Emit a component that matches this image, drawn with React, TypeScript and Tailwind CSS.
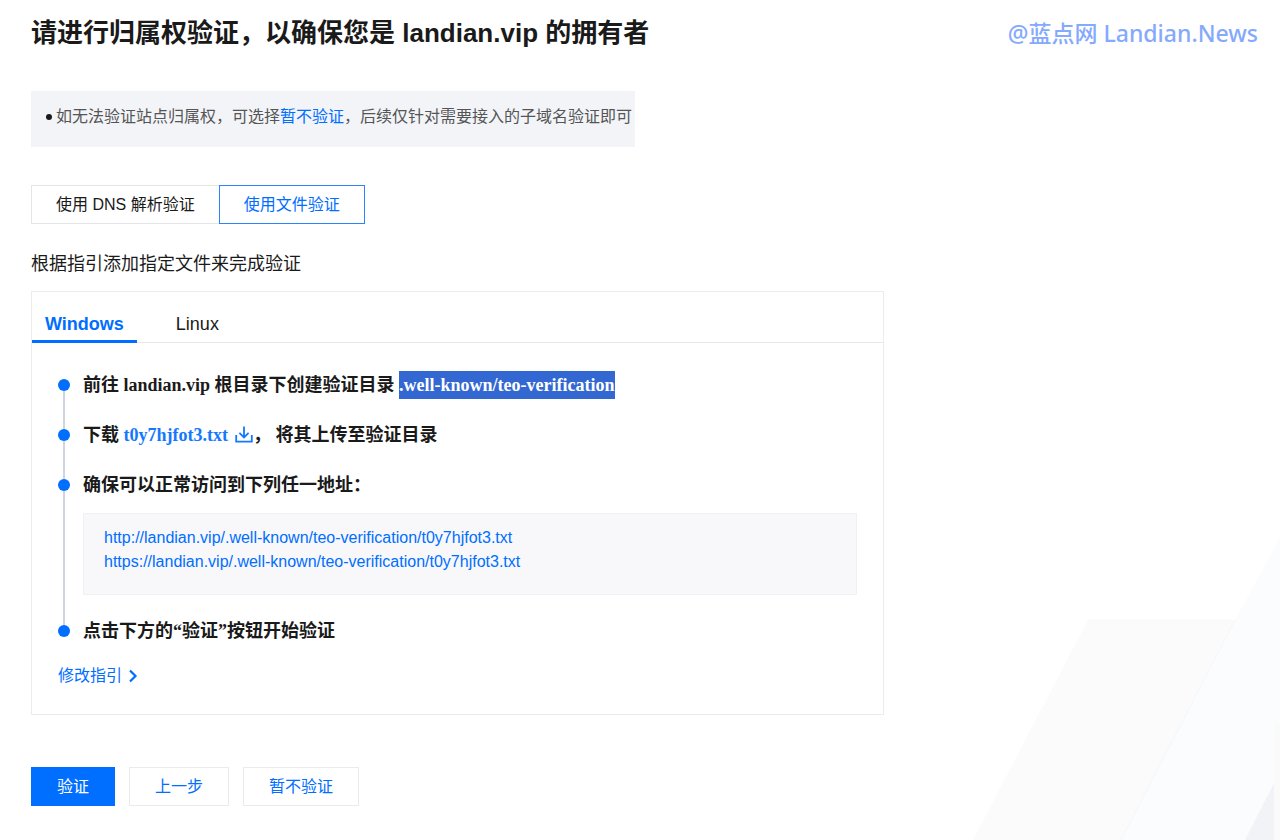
import { useState } from "react";
import type { ReactNode } from "react";

const urls = [
  "http://landian.vip/.well-known/teo-verification/t0y7hjfot3.txt",
  "https://landian.vip/.well-known/teo-verification/t0y7hjfot3.txt",
];

function Backdrop() {
  return (
    <svg
      aria-hidden="true"
      className="pointer-events-none absolute right-0 bottom-0 -z-10"
      width="310"
      height="302"
      viewBox="0 0 310 302"
      fill="none"
    >
      <path d="M118 82H265L310 20V302H3Z" fill="#fbfbfc" />
      <path d="M310 0V302H151L265 82Z" fill="#fbfcfd" />
      <path d="M118 82H263" stroke="#f9fafb" />
      <path d="M265 82L151 302" stroke="#f5f6f9" />
      <path d="M304 186H310V302H304Z" fill="#fafafb" />
      <path d="M304 245V302H275Z" fill="#f2f3f7" />
    </svg>
  );
}

function DownloadIcon() {
  return (
    <svg width="18" height="18" viewBox="0 0 18 18" fill="none" stroke="currentColor" strokeWidth="1.8" aria-hidden="true">
      <path d="M9 0.5V11M4.4 6.8L9 11.4L13.6 6.8" />
      <path d="M1.2 9V15.6H16.8V9" />
    </svg>
  );
}

function Step({ children, last = false }: { children: ReactNode; last?: boolean }) {
  return (
    <li className="flex gap-[13px]">
      <div className="flex w-3 shrink-0 flex-col items-center pt-2">
        <span className="size-3 shrink-0 rounded-full bg-[#006eff]" />
        {!last && <span className="-mb-2 w-0.5 grow bg-[#cfd5de]" />}
      </div>
      <div className={last ? "min-w-0 grow" : "min-w-0 grow pb-[22px]"}>{children}</div>
    </li>
  );
}

const stepText =
  "font-['Liberation_Serif','Noto_Sans_CJK_SC',serif] text-[18px] leading-7 font-bold text-[#1a1a1a]";

export default function App() {
  const [method, setMethod] = useState("file");
  const [system, setSystem] = useState("Windows");

  const methodClass = (id: string) =>
    method === id
      ? "h-[39px] cursor-pointer border border-[#2b83ff] px-6 text-[#006eff]"
      : "h-[39px] cursor-pointer border border-r-0 border-[#e3e5e8] px-6 text-[#1a1a1a]";
  const tabClass = (id: string) =>
    system === id
      ? "border-b-3 border-[#006eff] px-[13px] pt-[18px] pb-0.5 font-bold text-[#006eff]"
      : "border-b-3 border-transparent px-[13px] pt-[18px] pb-0.5 text-[#1a1a1a]";

  return (
    <div
      lang="zh-CN"
      className="relative isolate min-h-screen bg-white px-[31px] pt-[13px] pb-[34px] font-['Liberation_Sans','Noto_Sans_CJK_SC',sans-serif] text-[16px] leading-6 text-[#1a1a1a]"
    >
      <Backdrop />
      <header className="-mr-[9px] flex items-center justify-between gap-6">
        <h1 className="text-[26px] leading-10 font-bold">请进行归属权验证，以确保您是 landian.vip 的拥有者</h1>
        <span className="shrink-0 font-['Noto_Sans','Noto_Sans_CJK_SC',sans-serif] text-[23px] leading-10 font-medium text-[#85a9fd]">
          @蓝点网 Landian.News
        </span>
      </header>

      <main>
        <ul className="mt-[38px] flex w-full max-w-[604px] bg-[#f2f4f8] pt-[14px] pr-0.5 pb-[18px] pl-[15px]">
          <li className="flex items-center gap-1 text-[#555]">
            <span className="size-1.5 shrink-0 rounded-full bg-[#1a1a1a]" />
            <span>
              如无法验证站点归属权，可选择
              <a href="#skip" className="text-[#006eff]">暂不验证</a>
              ，后续仅针对需要接入的子域名验证即可
            </span>
          </li>
        </ul>

        <div className="mt-[38px] flex">
          <button type="button" className={methodClass("dns")} onClick={() => setMethod("dns")}>
            使用 DNS 解析验证
          </button>
          <button type="button" className={methodClass("file")} onClick={() => setMethod("file")}>
            使用文件验证
          </button>
        </div>

        <h2 className="mt-[26px] text-[18px] leading-7">根据指引添加指定文件来完成验证</h2>

        <section className="mt-[13px] max-w-[853px] border border-[#ebecf0] bg-white">
          <div role="tablist" className="flex gap-[26px] border-b border-[#e6e8ee] text-[18px] leading-7">
            {["Windows", "Linux"].map((name) => (
              <button
                key={name}
                type="button"
                role="tab"
                aria-selected={system === name}
                className={`-mb-px ${tabClass(name)}`}
                onClick={() => setSystem(name)}
              >
                {name}
              </button>
            ))}
          </div>

          <div className="px-[26px] pt-7 pb-[26px]">
            <ol>
              <Step>
                <p className={stepText}>
                  前往 landian.vip 根目录下创建验证目录{" "}
                  <span className="inline-block bg-[#3367d1] text-white">.well-known/teo-verification</span>
                </p>
              </Step>
              <Step>
                <p className={`flex items-center ${stepText}`}>
                  <span className="whitespace-pre">下载 </span>
                  <a href="#download" className="flex items-center gap-[7px] text-[#1478ff]">
                    t0y7hjfot3.txt
                    <DownloadIcon />
                  </a>
                  <span className="whitespace-pre">， 将其上传至验证目录</span>
                </p>
              </Step>
              <Step>
                <p className={stepText}>确保可以正常访问到下列任一地址：</p>
                <ul className="mt-[14px] border border-[#f0f1f5] bg-[#f8f8fb] px-5 pt-3 pb-5">
                  {urls.map((url) => (
                    <li key={url}>
                      <a href={url} className="break-all text-[#006eff]">{url}</a>
                    </li>
                  ))}
                </ul>
              </Step>
              <Step last>
                <p className={stepText}>点击下方的“验证”按钮开始验证</p>
              </Step>
            </ol>
            <a href="#guide" className="mt-[19px] flex w-fit items-center gap-1.5 text-[#006eff]">
              修改指引
              <svg width="10" height="14" viewBox="0 0 10 14" fill="none" stroke="currentColor" strokeWidth="2.2" aria-hidden="true">
                <path d="M2 1.5L7.5 7L2 12.5" />
              </svg>
            </a>
          </div>
        </section>

        <div className="mt-[52px] flex gap-[14px] text-[#006eff]">
          <button type="button" className="h-[39px] border border-[#006eff] bg-[#006eff] px-[25px] text-white">
            验证
          </button>
          <button type="button" className="h-[39px] border border-[#e9ebf0] bg-white px-[25px]">上一步</button>
          <button type="button" className="h-[39px] border border-[#e9ebf0] bg-white px-[25px]">暂不验证</button>
        </div>
      </main>
    </div>
  );
}
